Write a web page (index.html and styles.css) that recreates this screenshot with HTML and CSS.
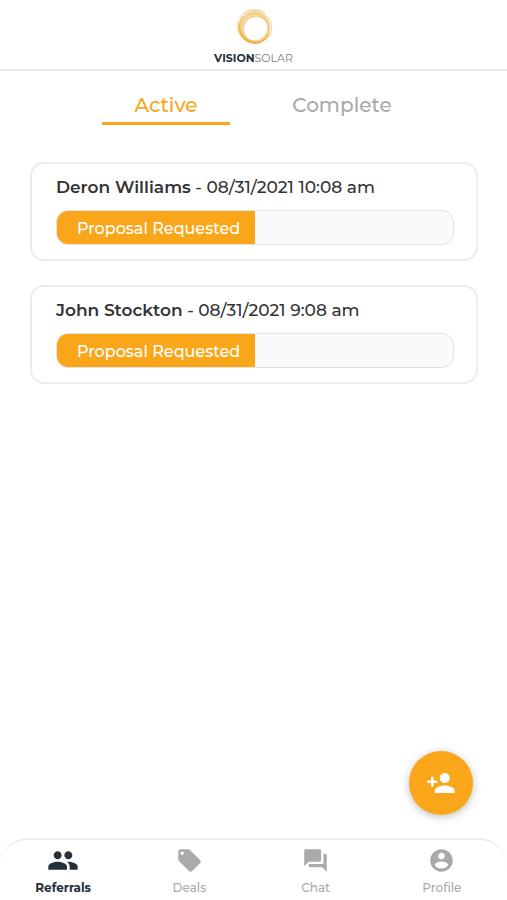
FILE: index.html
```html
<!DOCTYPE html>
<html lang="en">
<head>
    <meta charset="UTF-8" />
    <meta name="viewport" content="width=device-width, initial-scale=1.0">
    <title>Vision Solar - Referrals</title>
    <link rel="stylesheet" href="styles.css">
</head>
<body>
<header class="header">
    <svg class="logo-mark" viewBox="0 0 38 38" fill="none" aria-hidden="true">
        <path d="M19 3a16 16 0 1 0 .01 0zM21 9a12 12 0 1 1-.01 0z" fill="#f8dfb0" fill-rule="evenodd" />
        <circle cx="18" cy="18" r="16" stroke="#f8dfb2" stroke-width="1" />
        <circle cx="19" cy="19" r="14" stroke="#f5cf88" stroke-width="1" />
        <circle cx="20" cy="20" r="14" stroke="#f3c878" stroke-width="1" />
        <circle cx="21" cy="21" r="13" stroke="#f3c878" stroke-width="1" />
        <path d="M4 14C1 24 8 35 19 36C28 36 34 30 35 23C32 31 26 34 20 34C11 33 5 26 4 14z" fill="#edb245" />
        <path d="M8 8C3 14 4 24 9 29" stroke="#f1bd5c" stroke-width="1" />
        <path d="M33 9C38 16 37 25 33 30" stroke="#f5cd84" stroke-width="1" />
        <path d="M12 7C19 2 27 4 32 9M9 6C16 0 25 1 30 5" stroke="#f5cd84" stroke-width="1" />
    </svg>
    <div class="logo-text"><b>VISION</b>SOLAR</div>
</header>
<main class="main">
    <div class="tabs" role="tablist">
        <button class="tab active" type="button" role="tab" aria-selected="true">Active</button>
        <button class="tab" type="button" role="tab" aria-selected="false">Complete</button>
    </div>
    <div class="cards">
        <article class="card">
            <h2 class="card-title"><b>Deron Williams</b> - 08/31/2021 10:08 am</h2>
            <div class="progress">
                <div class="progress-fill" style="width: 50%">Proposal Requested</div>
            </div>
        </article>
        <article class="card">
            <h2 class="card-title"><b>John Stockton</b> - 08/31/2021 9:08 am</h2>
            <div class="progress">
                <div class="progress-fill" style="width: 50%">Proposal Requested</div>
            </div>
        </article>
    </div>
</main>
<button class="fab" type="button" aria-label="Add referral">
    <svg viewBox="0 0 24 24" fill="currentColor"><path d="M15 12c2.21 0 4-1.79 4-4s-1.79-4-4-4-4 1.79-4 4 1.79 4 4 4zm-9-2V7H4v3H1v2h3v3h2v-3h3v-2H6zm9 4c-2.67 0-8 1.34-8 4v2h16v-2c0-2.66-5.33-4-8-4z"/></svg>
</button>
<nav class="nav">
    <a class="nav-item active" href="#referrals">
        <svg class="wide" viewBox="0 2 24 20" fill="currentColor"><path d="M16 11c1.66 0 2.99-1.34 2.99-3S17.66 5 16 5c-1.66 0-3 1.34-3 3s1.34 3 3 3zm-8 0c1.66 0 2.99-1.34 2.99-3S9.66 5 8 5C6.34 5 5 6.34 5 8s1.34 3 3 3zm0 2c-2.33 0-7 1.17-7 3.5V19h14v-2.5c0-2.33-4.67-3.5-7-3.5zm8 0c-.29 0-.62.02-.97.05 1.16.84 1.97 1.97 1.97 3.45V19h6v-2.5c0-2.33-4.67-3.5-7-3.5z"/></svg>
        <span>Referrals</span>
    </a>
    <a class="nav-item" href="#deals">
        <svg viewBox="0 0 24 24" fill="currentColor"><path d="M21.41 11.58l-9-9C12.05 2.22 11.55 2 11 2H4c-1.1 0-2 .9-2 2v7c0 .55.22 1.05.59 1.42l9 9c.36.36.86.58 1.41.58.55 0 1.05-.22 1.41-.59l7-7c.37-.36.59-.86.59-1.41 0-.55-.23-1.06-.59-1.42zM5.5 7C4.67 7 4 6.33 4 5.5S4.67 4 5.5 4 7 4.67 7 5.5 6.33 7 5.5 7z"/></svg>
        <span>Deals</span>
    </a>
    <a class="nav-item" href="#chat">
        <svg viewBox="0 0 24 24" fill="currentColor"><path d="M21 6h-2v9H6v2c0 .55.45 1 1 1h11l4 4V7c0-.55-.45-1-1-1zm-4 6V3c0-.55-.45-1-1-1H3c-.55 0-1 .45-1 1v14l4-4h10c.55 0 1-.45 1-1z"/></svg>
        <span>Chat</span>
    </a>
    <a class="nav-item" href="#profile">
        <svg viewBox="0 0 24 24" fill="currentColor"><path d="M12 2C6.48 2 2 6.48 2 12s4.48 10 10 10 10-4.48 10-10S17.52 2 12 2zm0 3c1.66 0 3 1.34 3 3s-1.34 3-3 3-3-1.34-3-3 1.34-3 3-3zm0 14.2c-2.5 0-4.71-1.28-6-3.22.03-1.99 4-3.08 6-3.08 1.99 0 5.97 1.09 6 3.08-1.29 1.94-3.5 3.22-6 3.22z"/></svg>
        <span>Profile</span>
    </a>
</nav>
</body>
</html>
```
FILE: styles.css
```css
* {
    box-sizing: border-box;
    margin: 0;
    padding: 0;
}
body {
    display: flex;
    flex-direction: column;
    min-height: 100vh;
    background: #fff;
    color: #333;
    font-family: Montserrat, Inter, sans-serif;
    font-weight: 500;
}
button {
    border: 0;
    background: none;
    font: inherit;
    cursor: pointer;
}

.header {
    display: flex;
    flex-direction: column;
    align-items: center;
    gap: 5px;
    padding: 8px 0 3px;
    border-bottom: 2px solid #ebebeb;
}
.logo-mark {
    width: 38px;
    height: 38px;
}
.logo-text {
    color: #7b8084;
    font-size: 11px;
    font-weight: 400;
    line-height: 15px;
}
.logo-text b {
    color: #25313a;
    font-weight: 700;
}

.main {
    flex: 1;
    padding: 17px 29px 0 30px;
}
.tabs {
    display: flex;
    justify-content: center;
    gap: 48px;
}
.tab {
    width: 128px;
    padding: 4px 0 3px;
    border-bottom: 3px solid transparent;
    color: #aaa;
    font-size: 20px;
    line-height: 27px;
}
.tab.active {
    border-color: #f9a61a;
    color: #f9a61a;
}
.cards {
    display: flex;
    flex-direction: column;
    gap: 24px;
    margin-top: 37px;
}
.card {
    padding: 11px 22px 14px 24px;
    border: 2px solid #ededed;
    border-radius: 14px;
}
.card-title {
    margin-bottom: 11px;
    font-size: 17px;
    font-weight: 500;
    line-height: 24px;
}
.card-title b {
    font-weight: 600;
}
.progress {
    overflow: hidden;
    border: 1px solid #e2e2e2;
    border-radius: 12px;
    background: #fafafa;
}
.progress-fill {
    padding: 3px 0 0 20px;
    background: #f9a61a;
    color: #fff;
    font-size: 16px;
    line-height: 30px;
    white-space: nowrap;
}

.fab {
    position: fixed;
    right: 34px;
    bottom: 85px;
    display: flex;
    align-items: center;
    justify-content: center;
    width: 64px;
    height: 64px;
    border-radius: 50%;
    background: #f9a61a;
    box-shadow: 0 2px 8px rgba(0, 0, 0, .25);
    color: #fff;
}
.fab svg {
    width: 30px;
    height: 30px;
}

.nav {
    position: sticky;
    bottom: 0;
    display: flex;
    padding-right: 2px;
    border-top: 2px solid #ededed;
    border-radius: 28px 28px 0 0;
    background: #fff;
}
.nav-item {
    display: flex;
    flex: 1;
    flex-direction: column;
    align-items: center;
    gap: 6px;
    padding: 7px 0 4px;
    color: #aaa;
    font-size: 12px;
    line-height: 16px;
    text-decoration: none;
}
.nav-item svg {
    width: 27px;
    height: 27px;
}
.nav-item .wide {
    width: 32px;
}
.nav-item.active {
    color: #25313a;
    font-weight: 700;
}
```
